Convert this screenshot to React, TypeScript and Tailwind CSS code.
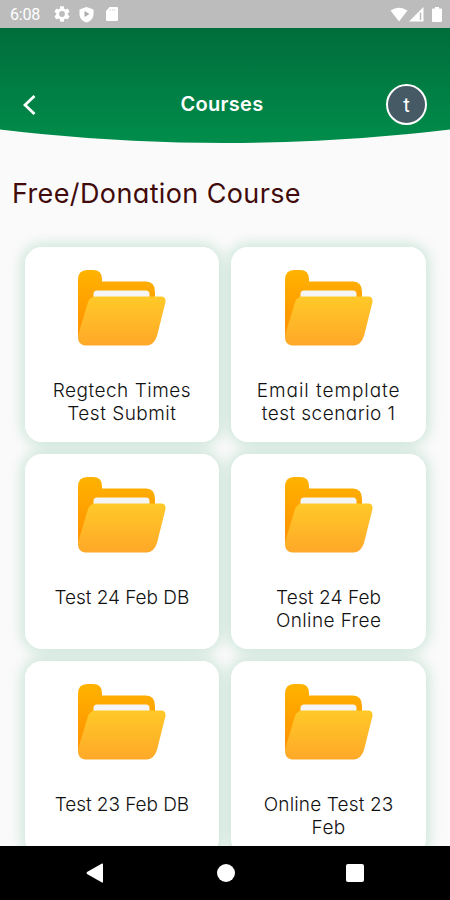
import React from "react";

type Line = { text: string; spacing: string };
type Course = { id: number; lines: Line[] };

const courses: Course[] = [
  { id: 1, lines: [{ text: "Regtech Times", spacing: "tracking-[0.5px]" }, { text: "Test Submit", spacing: "tracking-[0.5px]" }] },
  { id: 2, lines: [{ text: "Email template", spacing: "tracking-[0.95px]" }, { text: "test scenario 1", spacing: "tracking-[0.45px]" }] },
  { id: 3, lines: [{ text: "Test 24 Feb DB", spacing: "tracking-[-0.05px]" }] },
  { id: 4, lines: [{ text: "Test 24 Feb", spacing: "tracking-[0.1px]" }, { text: "Online Free", spacing: "tracking-[0.4px]" }] },
  { id: 5, lines: [{ text: "Test 23 Feb DB", spacing: "tracking-[-0.05px]" }] },
  { id: 6, lines: [{ text: "Online Test 23", spacing: "tracking-[0.15px]" }, { text: "Feb", spacing: "tracking-[0.4px]" }] },
];

function Folder() {
  return (
    <svg width="90" height="78" viewBox="0 0 90 78" className="shrink-0">
      <defs>
        <linearGradient id="back" x1="0" y1="0" x2="0" y2="1">
          <stop offset="0" stopColor="#ffb300" />
          <stop offset="0.5" stopColor="#ffa000" />
          <stop offset="1" stopColor="#ff8f00" />
        </linearGradient>
        <linearGradient id="front" x1="0" y1="0" x2="0" y2="1">
          <stop offset="0" stopColor="#ffc928" />
          <stop offset="1" stopColor="#ffa828" />
        </linearGradient>
      </defs>
      <path d="M1 11Q1 1 10 1H16Q25 1 25 10V12.500H69Q78 12.500 78 23V45L30 70H6Q1 70 1 65Z" fill="url(#back)" />
      <path d="M16.500 30V25Q16.500 21.500 20 21.500H69Q72.500 21.500 72.500 25V30Z" fill="#f5f5f5" />
      <path d="M19 27.500H85Q89 28 88.500 33L80 67Q77 76 70 76.500H8Q1.500 76 1 69Q1 66 2 63L11 33Q13 27.500 19 27.500Z" fill="url(#front)" />
    </svg>
  );
}

function CourseCard({ course }: { course: Course }) {
  return (
    <div className="h-[195px] rounded-[17px] shadow-[0_0_14px_3px_rgba(0,145,80,0.19)]">
      <div className="relative z-10 flex h-full flex-col items-center rounded-[17px] bg-white pt-[22px]">
        <Folder />
        <div className="mt-[32px] flex flex-col items-center whitespace-nowrap text-[19px] leading-[23px] font-light text-[#111]">
          {course.lines.map((line) => (
            <span key={line.text} className={line.spacing}>{line.text}</span>
          ))}
        </div>
      </div>
    </div>
  );
}

function StatusBar() {
  return (
    <div className="flex h-[28px] shrink-0 items-center bg-[#bcbcbc] pr-[8px] pl-[10px] text-white">
      <span className="w-[44px] pt-[2px] font-[Roboto] text-[16px] leading-none tracking-[-0.2px]">6:08</span>
      <svg width="16" height="18" viewBox="2 1 20 22" fill="currentColor">
        <path d="M19.140 12.940c.04-.3.060-.61.060-.94 0-.32-.02-.64-.07-.94l2.030-1.580a.49.49 0 0 0 .12-.61l-1.920-3.320a.488.488 0 0 0-.59-.22l-2.390.96c-.5-.38-1.030-.7-1.620-.94l-.36-2.540a.484.484 0 0 0-.48-.41h-3.840c-.24 0-.43.17-.47.41l-.36 2.540c-.59.24-1.130.57-1.620.94l-2.390-.96c-.22-.08-.47 0-.59.22L2.740 8.870c-.12.21-.08.47.12.61l2.030 1.580c-.05.3-.09.63-.09.94s.02.64.07.94l-2.030 1.580a.49.49 0 0 0-.12.61l1.920 3.320c.12.22.37.29.59.22l2.390-.96c.5.38 1.030.7 1.620.94l.36 2.540c.05.24.24.41.48.41h3.840c.24 0 .44-.17.47-.41l.36-2.540c.59-.24 1.130-.56 1.620-.94l2.390.96c.22.08.47 0 .59-.22l1.920-3.320c.12-.22.070-.47-.12-.61l-2.010-1.580zM12 15.600A3.600 3.600 0 1 1 12 8.400a3.600 3.600 0 0 1 0 7.200z" />
      </svg>
      <svg width="15" height="17" viewBox="0 0 15 17" className="ml-[9px]">
        <path d="M7.500 1L14.500 3.500V8C14.500 12 11.500 15.500 7.500 16.500C3.500 15.500 0.500 12 0.500 8V3.500Z" fill="currentColor" />
        <path d="M5.500 5L10.500 8L5.500 11Z" fill="#aaaaaa" />
      </svg>
      <svg width="14" height="16" viewBox="0 0 14 16" className="ml-[11px]">
        <path d="M4.500 1H12Q13 1 13 2V14Q13 15 12 15H2Q1 15 1 14V5Z" fill="currentColor" />
        <path d="M5.200 3V5M7.500 3V5M9.800 3V5" stroke="#e0e0e0" strokeWidth="1" />
      </svg>
      <svg width="18" height="15" viewBox="0 0 18 15" className="ml-auto">
        <path d="M9 14.500L0.500 3.500Q9 -2 17.500 3.500Z" fill="currentColor" />
      </svg>
      <svg width="15" height="15" viewBox="0 0 15 15" className="ml-px">
        <path d="M14.500 0V14.500H0Z" fill="currentColor" />
        <path d="M11.500 5.500V13" stroke="#bcbcbc" strokeWidth="1.500" />
      </svg>
      <svg width="10" height="15" viewBox="0 0 10 15" className="ml-[8px]">
        <path d="M3 0H7V1.500H9Q10 1.500 10 2.500V14Q10 15 9 15H1Q0 15 0 14V2.500Q0 1.500 1 1.500H3Z" fill="currentColor" />
      </svg>
    </div>
  );
}

export default function App() {
  return (
    <div className="flex h-[900px] w-[450px] flex-col overflow-hidden bg-[#fafafa] font-[Inter,'Open_Sans',sans-serif] [font-feature-settings:'cv11']">
      <StatusBar />
      <header className="grid h-[115px] shrink-0 grid-cols-[1fr_auto_1fr] items-center bg-linear-to-b from-[#006d3b] to-[#008d4b] px-[23px] pt-[37px] text-white [clip-path:ellipse(1875px_1875px_at_50%_-1760px)]">
        <svg width="13" height="20" viewBox="0 0 13 20" fill="none" stroke="currentColor" strokeWidth="2.800" className="mt-px">
          <path d="M11.500 1L2 10L11.500 19" />
        </svg>
        <h1 className="mr-[6px] text-[20px] leading-none font-semibold tracking-[0.3px]">Courses</h1>
        <div className="mt-px flex size-[41px] items-center justify-center justify-self-end rounded-full border-[2.500px] border-white bg-[#455a64] font-[Roboto] text-[20px] leading-none">t</div>
      </header>
      <main className="min-h-0 grow overflow-hidden">
        <h2 className="mt-[34px] ml-[12px] text-[27px] leading-[34px] tracking-[0.38px] whitespace-nowrap text-[#420b0b]">Free/Donation Course</h2>
        <div className="mt-[35.500px] ml-[24.500px] grid w-[401.500px] grid-cols-2 gap-x-[12px] gap-y-[12px]">
          {courses.map((course) => <CourseCard key={course.id} course={course} />)}
        </div>
      </main>
      <nav className="flex h-[54px] shrink-0 items-center bg-black pl-[86px]">
        <svg width="18" height="20" viewBox="0 0 18 20"><path d="M16 0.500Q17 0 17 1.500V18.500Q17 20 16 19.500L1 11Q0 10 1 9Z" fill="white" /></svg>
        <div className="ml-[112.500px] size-[18px] rounded-full bg-white" />
        <div className="ml-[111px] size-[18.500px] rounded-[2px] bg-white" />
      </nav>
    </div>
  );
}
